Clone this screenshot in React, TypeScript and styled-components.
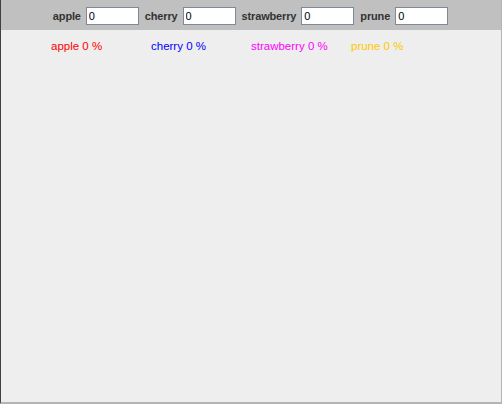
import React from "react";
import styled, { createGlobalStyle } from "styled-components";

const Global = createGlobalStyle`
  html, body { margin: 0; padding: 0; }
  body { width: 502px; height: 404px; overflow: hidden; font-family: "Liberation Sans", Arial, sans-serif; }
`;

const Frame = styled.div`
  box-sizing: border-box;
  width: 502px;
  height: 404px;
  display: flex;
  flex-direction: column;
  background: #eeeeee;
  border-left: 1px solid #404040;
  border-right: 1px solid #b4b4b4;
  border-bottom: 2px solid #b4b4b4;
`;

const Toolbar = styled.div`
  box-sizing: border-box;
  height: 30px;
  padding-top: 2px;
  background: #c0c0c0;
  display: flex;
  align-items: center;
  justify-content: center;
  gap: 5px;
`;

const FieldLabel = styled.span`
  font-size: 11px;
  font-weight: bold;
  letter-spacing: -0.15px;
  color: #333333;
`;

const Field = styled.input`
  box-sizing: border-box;
  width: 53px;
  height: 18px;
  margin: 0 1px 0 0;
  padding: 0 0 0 2px;
  border: 1px solid #7d8a96;
  background: #ffffff;
  font-family: "Liberation Sans", Arial, sans-serif;
  font-size: 11px;
  color: #000;
  outline: none;
`;

const Legend = styled.div`
  display: flex;
  padding: 10px 0 0 50px;
`;

const LegendItem = styled.span<{ $color: string }>`
  width: 100px;
  font-size: 11.5px;
  line-height: 13px;
  color: ${(p) => p.$color};
  white-space: nowrap;
`;

const fruits = [
  { name: "apple", color: "#ff0000" },
  { name: "cherry", color: "#0000ff" },
  { name: "strawberry", color: "#ff00ff" },
  { name: "prune", color: "#ffc800" },
];

export default function App() {
  return (
    <>
      <Global />
      <Frame>
        <Toolbar>
          {fruits.map((f) => (
            <React.Fragment key={f.name}>
              <FieldLabel>{f.name}</FieldLabel>
              <Field defaultValue="0" />
            </React.Fragment>
          ))}
        </Toolbar>
        <Legend>
          {fruits.map((f) => (
            <LegendItem key={f.name} $color={f.color}>
              {f.name} 0 %
            </LegendItem>
          ))}
        </Legend>
      </Frame>
    </>
  );
}
